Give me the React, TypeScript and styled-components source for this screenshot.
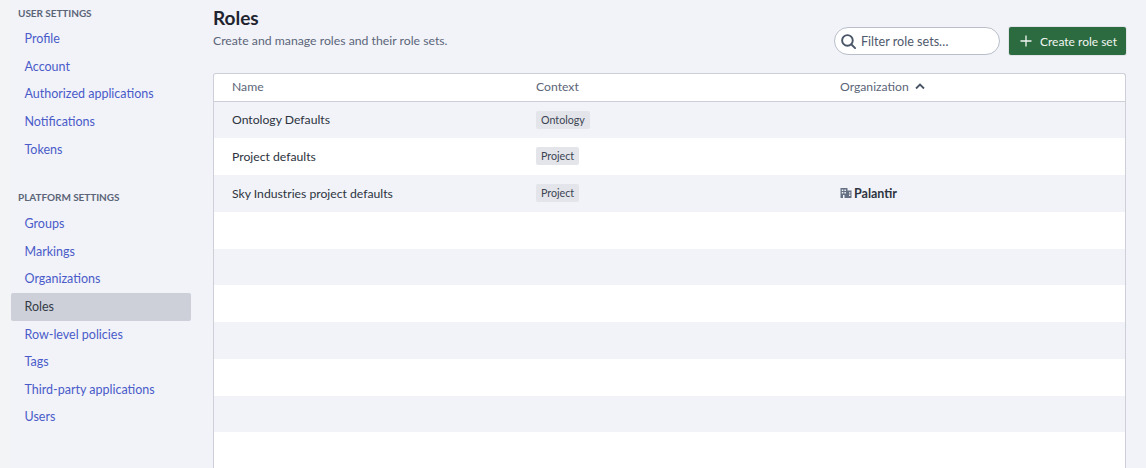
import React from 'react';
import styled, { createGlobalStyle } from 'styled-components';

const Global = createGlobalStyle`
  html, body { margin: 0; padding: 0; height: 468px; overflow: hidden; background: #f1f3f8; }
  #root { height: 468px; }
  * { box-sizing: border-box; }
`;

const Page = styled.div`
  width: 1146px; height: 468px; display: flex; overflow: hidden;
  font-family: "Lato", "Noto Sans", sans-serif; background: #f1f3f8;
`;
const Gutter = styled.div`width: 10px; flex: none; background: #f3f4f5;`;
const Sidebar = styled.nav`
  width: 203px; flex: none; padding: 6px 0 0 1px; display: flex; flex-direction: column;
`;
const SectionTitle = styled.div<{ $after: number }>`
  font-size: 10px; font-weight: 700; line-height: 14px; color: #5c6578;
  padding-left: 7px; height: 14px; margin-bottom: ${p => p.$after}px; letter-spacing: -0.05px;
`;
const NavItem = styled.a<{ $active?: boolean }>`
  display: flex; align-items: center; width: 180px; height: 27.6px; padding-left: 13.5px; border-radius: 2px;
  font-size: 12.5px; line-height: 16px; color: ${p => (p.$active ? '#333a45' : '#4a5bc9')};
  background: ${p => (p.$active ? '#cdd0d9' : 'transparent')};
`;
const Group = styled.div<{ $gap?: number }>`
  display: flex; flex-direction: column; margin-bottom: ${p => p.$gap ?? 0}px;
`;
const Main = styled.main`
  width: 913px; flex: none; padding-top: 6px; display: flex; flex-direction: column;
`;
const Header = styled.header`
  display: flex; justify-content: space-between; align-items: flex-start; height: 49px; margin-bottom: 17.5px;
`;
const Heading = styled.div`display: flex; flex-direction: column;`;
const Title = styled.h1`margin: 0; font-size: 19px; font-weight: 700; line-height: 24px; color: #1f2430;`;
const Subtitle = styled.p`margin: 3px 0 0; font-size: 12.25px; line-height: 16px; color: #5c6578;`;
const Actions = styled.div`display: flex; align-items: center; gap: 9px; margin-top: 21px;`;
const Search = styled.label`
  display: flex; align-items: center; gap: 4px; width: 166px; height: 28px; padding-left: 5px;
  border: 1px solid #b9bec9; border-radius: 14px; background: #fff; color: #4f596c; font-size: 12.6px;
`;
const CreateButton = styled.button`
  display: flex; align-items: center; gap: 8px; width: 117px; height: 28px; padding: 0 0 0 11px;
  background: #2c6b3f; border: none; border-radius: 2px; color: #f2f6f3;
  font: 400 12px "Lato", sans-serif; box-shadow: 0 0 0 1px rgba(0,0,0,0.06);
`;
const Table = styled.section`
  background: #fff; border: 1px solid #cdd0d8; border-bottom: none; border-radius: 3px 3px 0 0; flex: 1; overflow: hidden;
`;
const HeadRow = styled.div`
  display: grid; grid-template-columns: 304px 304px 1fr; height: 28.2px; align-items: center;
  border-bottom: 1px solid #cdd0d8; padding: 0 0 1px 18px; font-size: 12.2px; color: #5c6578;
`;
const HeadCell = styled.div`display: flex; align-items: center; gap: 6px;`;
const Row = styled.div<{ $odd: boolean }>`
  display: grid; grid-template-columns: 304px 304px 1fr; height: 36.75px; align-items: center; padding: 0 0 1px 18px;
  background: ${p => (p.$odd ? '#f1f3f8' : '#fff')}; font-size: 12.2px; color: #2d3340;
`;
const Tag = styled.span`
  justify-self: start; display: inline-block; height: 18px; line-height: 18px; padding: 0 5px; border-radius: 2px;
  background: #e3e5ea; font-size: 10.7px; color: #3c4452;
`;
const Org = styled.span`
  display: flex; align-items: center; gap: 2px; font-weight: 700; font-size: 12.5px; color: #2d3340;
`;

const user = ['Profile', 'Account', 'Authorized applications', 'Notifications', 'Tokens'];
const platform = ['Groups', 'Markings', 'Organizations', 'Roles', 'Row-level policies', 'Tags', 'Third-party applications', 'Users'];
const rows = [
  { name: 'Ontology Defaults', ctx: 'Ontology' },
  { name: 'Project defaults', ctx: 'Project' },
  { name: 'Sky Industries project defaults', ctx: 'Project', org: 'Palantir' },
  {}, {}, {}, {}, {}, {}, {},
] as { name?: string; ctx?: string; org?: string }[];

export default function App() {
  return (
    <Page>
      <Global />
      <Gutter />
      <Sidebar>
        <SectionTitle $after={5.5}>USER SETTINGS</SectionTitle>
        <Group $gap={26.5}>
          {user.map(u => <NavItem key={u}>{u}</NavItem>)}
        </Group>
        <SectionTitle $after={6.5}>PLATFORM SETTINGS</SectionTitle>
        <Group>
          {platform.map(u => <NavItem key={u} $active={u === 'Roles'}>{u}</NavItem>)}
        </Group>
      </Sidebar>
      <Main>
        <Header>
          <Heading>
            <Title>Roles</Title>
            <Subtitle>Create and manage roles and their role sets.</Subtitle>
          </Heading>
          <Actions>
            <Search>
              <svg width="17" height="17" viewBox="0 0 16 16" fill="none" stroke="#4a5568" strokeWidth="1.8" strokeLinecap="round">
                <circle cx="7" cy="7" r="5" />
                <path d="M10.8 10.8 14.2 14.2" />
              </svg>
              Filter role sets…
            </Search>
            <CreateButton>
              <svg width="12" height="12" viewBox="0 0 12 12" stroke="#f2f6f3" strokeWidth="1.3">
                <path d="M6 .5v11M.5 6h11" />
              </svg>
              Create role set
            </CreateButton>
          </Actions>
        </Header>
        <Table>
          <HeadRow>
            <HeadCell>Name</HeadCell>
            <HeadCell>Context</HeadCell>
            <HeadCell>
              Organization
              <svg width="10" height="7" viewBox="0 0 10 7" fill="none" stroke="#4a5568" strokeWidth="1.8">
                <path d="M1 5.5 5 1.5l4 4" />
              </svg>
            </HeadCell>
          </HeadRow>
          {rows.map((r, i) => (
            <Row key={i} $odd={i % 2 === 0}>
              <div>{r.name}</div>
              {r.ctx ? <Tag>{r.ctx}</Tag> : <div />}
              {r.org ? (
                <Org>
                  <svg width="12" height="12" viewBox="0 0 12 12" fill="#667085">
                    <path d="M.5 1h7v10h-7zM7.5 3.5h4V11h-4z" />
                    <path d="M1.8 2.4h1.5v1.5H1.8zM4.4 2.4h1.5v1.5H4.4zM1.8 5h1.5v1.5H1.8zM4.4 5h1.5v1.5H4.4zM3 8h1.5v3H3zM9 5.2h1.4v1.3H9zM9 7.6h1.4v1.3H9z" fill="#f1f3f8" />
                  </svg>
                  {r.org}
                </Org>
              ) : <div />}
            </Row>
          ))}
        </Table>
      </Main>
    </Page>
  );
}
